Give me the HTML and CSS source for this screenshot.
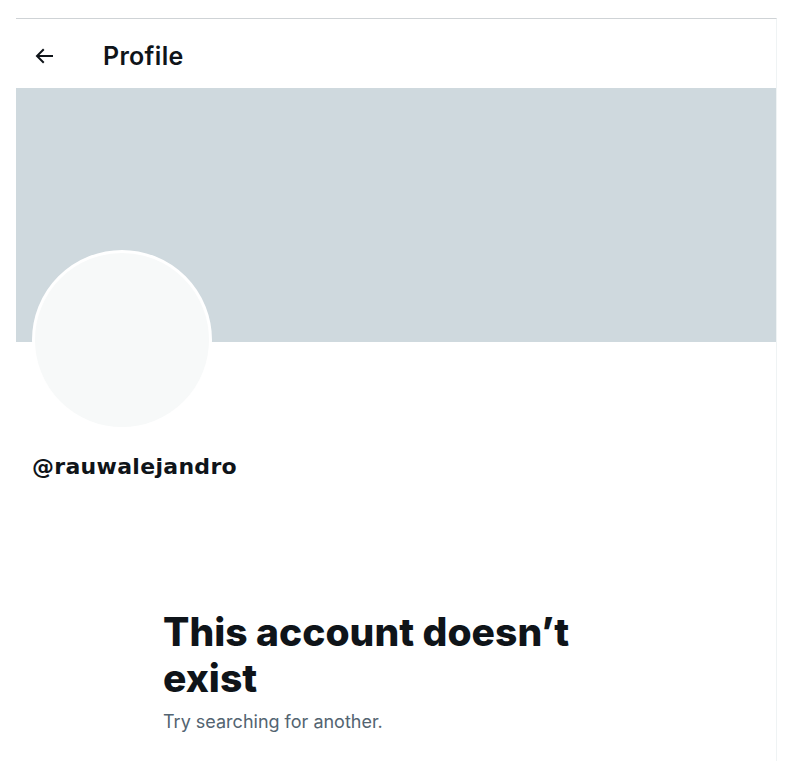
FILE: index.html
```html
<!DOCTYPE html>
<html lang="en">
<head>
    <meta charset="UTF-8">
    <meta name="viewport" content="width=device-width, initial-scale=1.0">
    <title>Profile</title>
    <link rel="stylesheet" href="styles.css">
</head>
<body>
    <div class="page">
        <header class="top-bar">
            <a class="back" href="#" aria-label="Back">
                <svg viewBox="0 0 24 24" width="24" height="24"><path d="M7.414 13l5.043 5.04-1.414 1.42L3.586 12l7.457-7.46 1.414 1.42L7.414 11H21v2H7.414z"/></svg>
            </a>
            <h1>Profile</h1>
        </header>

        <div class="banner"></div>

        <div class="profile">
            <div class="avatar"></div>
            <div class="handle">@rauwalejandro</div>
        </div>

        <div class="empty-state">
            <h2>This account doesn’t exist</h2>
            <p>Try searching for another.</p>
        </div>
    </div>
</body>
</html>
```

FILE: styles.css
```css
body {
    font-family: Inter, "Noto Sans", Arial, sans-serif;
    margin: 0;
    padding: 0;
    color: #0f1419;
    background-color: #fff;
}
.page {
    margin: 18px 0 0 16px;
    width: 760px;
    min-height: 742px;
    border-top: 1px solid #cfd3d6;
    border-right: 1px solid #eff3f4;
}
.top-bar {
    display: flex;
    align-items: center;
    height: 69px;
    padding: 4px 0 0 16px;
    box-sizing: border-box;
}
.back {
    display: flex;
    width: 24px;
    height: 24px;
    color: #0f1419;
    margin-right: 47px;
}
.back svg {
    fill: currentColor;
}
.top-bar h1 {
    margin: 0;
    font-size: 25px;
    font-weight: 600;
    letter-spacing: 0.3px;
}
.banner {
    height: 254px;
    background-color: #cfd9de;
}
.profile {
    padding: 0 16px;
}
.avatar {
    width: 174px;
    height: 174px;
    margin-top: -92px;
    border-radius: 50%;
    background-color: #f7f9f9;
    border: 3px solid #fff;
}
.handle {
    margin-top: 24px;
    font-family: "DejaVu Sans", Verdana, sans-serif;
    font-size: 22px;
    font-weight: 700;
    letter-spacing: 0.3px;
}
.empty-state {
    padding: 130px 0 0 147px;
    max-width: 440px;
}
.empty-state h2 {
    margin: 0;
    font-size: 39px;
    line-height: 46px;
    font-weight: 800;
}
.empty-state p {
    margin: 10px 0 0;
    font-size: 18px;
    color: #536471;
}
```
